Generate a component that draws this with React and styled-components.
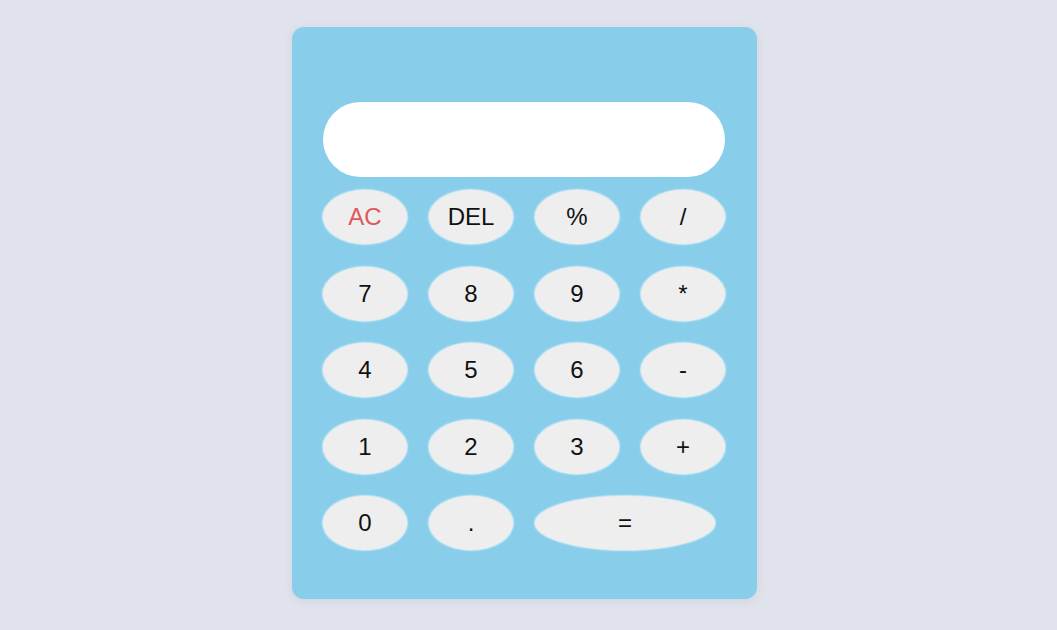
import React from 'react';
import styled, { createGlobalStyle } from 'styled-components';

const GlobalStyle = createGlobalStyle`
    html, body {
        margin: 0;
        padding: 0;
        background: #e0e3ec;
        font-family: "Liberation Sans", Arial, sans-serif;
    }
`;

const Page = styled.div`
    min-height: 630px;
    display: flex;
    justify-content: center;
    align-items: flex-start;
    padding: 27px 8px 0 0;
    box-sizing: border-box;
`;

const Calculator = styled.div`
    width: 465px;
    box-sizing: border-box;
    padding: 75px 32px 49px 31px;
    background-color: #88ceea;
    border-radius: 12px;
    box-shadow: 0 2px 8px rgba(120, 130, 150, 0.15);
`;

const Display = styled.div`
    height: 75px;
    background: #ffffff;
    border-radius: 38px;
    margin-bottom: 13px;
`;

const Keys = styled.div`
    display: grid;
    grid-template-columns: repeat(4, 84px);
    grid-auto-rows: 54px;
    column-gap: 22px;
    row-gap: 22.5px;
`;

const Key = styled.button`
    width: ${p => (p.$wide ? '180px' : '84px')};
    grid-column: ${p => (p.$wide ? 'span 2' : 'auto')};
    height: 54px;
    border: none;
    border-radius: 50%;
    background: #eeeeee;
    box-shadow: 0 0 1.5px 1px rgba(230, 244, 250, 0.8);
    font-family: "Liberation Sans", Arial, sans-serif;
    font-size: 24px;
    color: ${p => (p.$danger ? '#e0585c' : '#111111')};
    padding: 0;
    cursor: pointer;
`;

const keys = [
    'AC', 'DEL', '%', '/',
    '7', '8', '9', '*',
    '4', '5', '6', '-',
    '1', '2', '3', '+',
    '0', '.', '=',
];

export default function App() {
    return (
        <>
            <GlobalStyle />
            <Page>
                <Calculator>
                    <Display />
                    <Keys>
                        {keys.map(k => (
                            <Key key={k} $danger={k === 'AC'} $wide={k === '='}>
                                {k}
                            </Key>
                        ))}
                    </Keys>
                </Calculator>
            </Page>
        </>
    );
}
